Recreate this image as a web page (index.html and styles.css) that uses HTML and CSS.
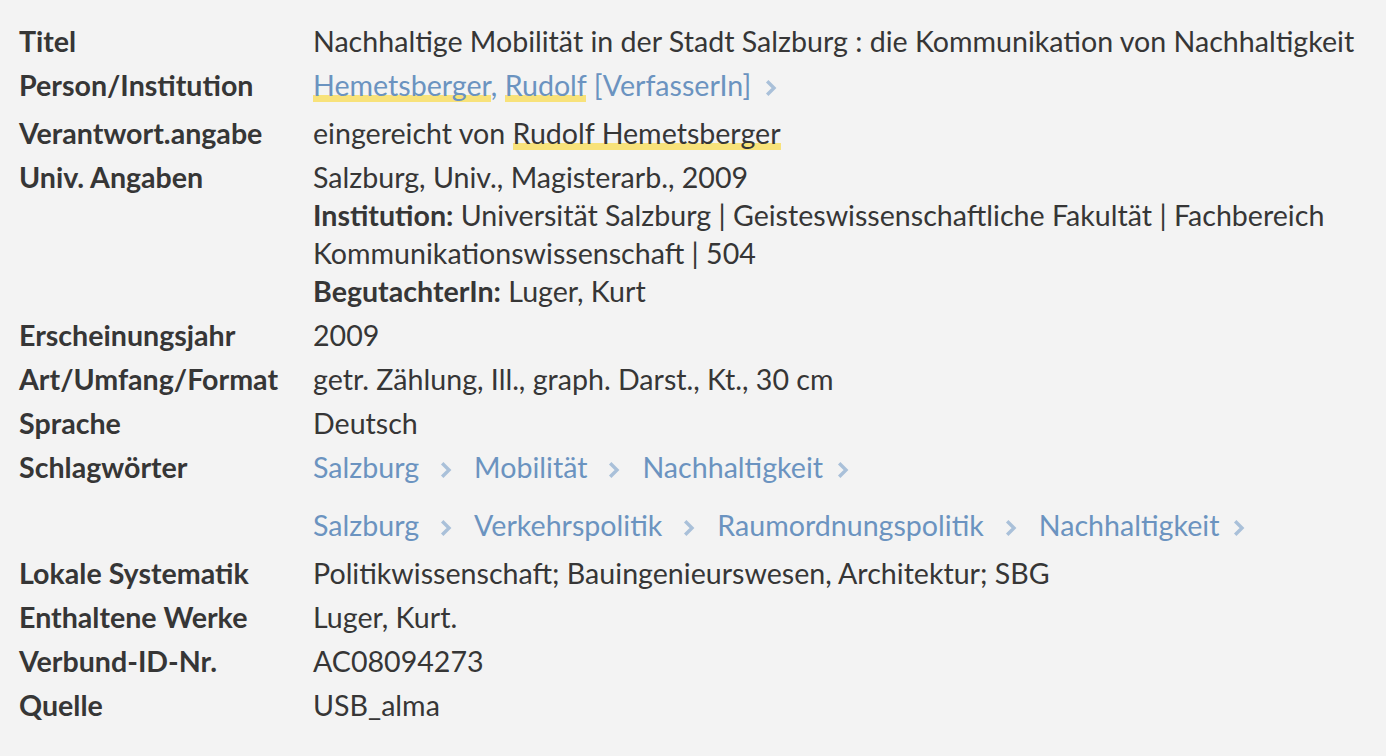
FILE: index.html
```html
<!DOCTYPE html>
<html lang="de">
<head>
<meta charset="utf-8">
<title>Detail</title>
<link rel="stylesheet" href="styles.css">
</head>
<body>
<dl class="record">
  <div class="row">
    <dt>Titel</dt>
    <dd>Nachhaltige Mobilität in der Stadt Salzburg : die Kommunikation von Nachhaltigkeit</dd>
  </div>
  <div class="row row-person">
    <dt>Person/Institution</dt>
    <dd><a class="link hl" href="#">Hemetsberger</a><span class="link">, </span><a class="link hl" href="#">Rudolf</a><span class="link"> [VerfasserIn]</span><span class="chev end"><svg viewBox="0 0 12 18" width="12" height="18"><path d="M2.2 2.2 L9 9 L2.2 15.8" fill="none" stroke="currentColor" stroke-width="3.4"/></svg></span></dd>
  </div>
  <div class="row">
    <dt>Verantwort.angabe</dt>
    <dd>eingereicht von <span class="hl">Rudolf Hemetsberger</span></dd>
  </div>
  <div class="row">
    <dt>Univ. Angaben</dt>
    <dd>Salzburg, Univ., Magisterarb., 2009<br><b>Institution:</b> Universität Salzburg | Geisteswissenschaftliche Fakultät | Fachbereich Kommunikationswissenschaft | 504<br><b>BegutachterIn:</b> Luger, Kurt</dd>
  </div>
  <div class="row">
    <dt>Erscheinungsjahr</dt>
    <dd>2009</dd>
  </div>
  <div class="row">
    <dt>Art/Umfang/Format</dt>
    <dd>getr. Zählung, Ill., graph. Darst., Kt., 30 cm</dd>
  </div>
  <div class="row">
    <dt>Sprache</dt>
    <dd>Deutsch</dd>
  </div>
  <div class="row row-subjects">
    <dt>Schlagwörter</dt>
    <dd>
      <div class="chain"><a class="link" href="#">Salzburg</a><span class="chev"><svg viewBox="0 0 12 18" width="12" height="18"><path d="M2.2 2.2 L9 9 L2.2 15.8" fill="none" stroke="currentColor" stroke-width="3.4"/></svg></span><a class="link" href="#">Mobilität</a><span class="chev"><svg viewBox="0 0 12 18" width="12" height="18"><path d="M2.2 2.2 L9 9 L2.2 15.8" fill="none" stroke="currentColor" stroke-width="3.4"/></svg></span><a class="link" href="#">Nachhaltigkeit</a><span class="chev end"><svg viewBox="0 0 12 18" width="12" height="18"><path d="M2.2 2.2 L9 9 L2.2 15.8" fill="none" stroke="currentColor" stroke-width="3.4"/></svg></span></div>
      <div class="chain"><a class="link" href="#">Salzburg</a><span class="chev"><svg viewBox="0 0 12 18" width="12" height="18"><path d="M2.2 2.2 L9 9 L2.2 15.8" fill="none" stroke="currentColor" stroke-width="3.4"/></svg></span><a class="link" href="#">Verkehrspolitik</a><span class="chev"><svg viewBox="0 0 12 18" width="12" height="18"><path d="M2.2 2.2 L9 9 L2.2 15.8" fill="none" stroke="currentColor" stroke-width="3.4"/></svg></span><a class="link" href="#">Raumordnungspolitik</a><span class="chev"><svg viewBox="0 0 12 18" width="12" height="18"><path d="M2.2 2.2 L9 9 L2.2 15.8" fill="none" stroke="currentColor" stroke-width="3.4"/></svg></span><a class="link" href="#">Nachhaltigkeit</a><span class="chev end"><svg viewBox="0 0 12 18" width="12" height="18"><path d="M2.2 2.2 L9 9 L2.2 15.8" fill="none" stroke="currentColor" stroke-width="3.4"/></svg></span></div>
    </dd>
  </div>
  <div class="row">
    <dt>Lokale Systematik</dt>
    <dd>Politikwissenschaft; Bauingenieurswesen, Architektur; SBG</dd>
  </div>
  <div class="row">
    <dt>Enthaltene Werke</dt>
    <dd>Luger, Kurt.</dd>
  </div>
  <div class="row">
    <dt>Verbund-ID-Nr.</dt>
    <dd>AC08094273</dd>
  </div>
  <div class="row">
    <dt>Quelle</dt>
    <dd>USB_alma</dd>
  </div>
</dl>
</body>
</html>
```
FILE: styles.css
```css
html, body {
  margin: 0;
  padding: 0;
  background: #f3f3f3;
}
body {
  font-family: Lato, "Noto Sans", sans-serif;
  font-size: 28.6px;
  line-height: 38px;
  color: #363636;
}
.record {
  margin: 0;
  padding: 22px 19px 0 19px;
  display: flex;
  flex-direction: column;
  gap: 6px;
}
.row {
  display: grid;
  grid-template-columns: 294px 1fr;
}
.row-person {
  padding-bottom: 4px;
}
dt {
  font-weight: 700;
  margin: 0;
}
dd {
  margin: 0;
}
b {
  font-weight: 700;
}
.link {
  color: #6b93c0;
  text-decoration: none;
}
.hl {
  background-image: linear-gradient(#f8e27a, #f8e27a);
  background-repeat: no-repeat;
  background-size: 100% 7px;
  background-position: 0 27px;
  padding-bottom: 2px;
}
.chev {
  display: inline-block;
  color: #a9c0d9;
  margin: 0 22px 0 21px;
  vertical-align: -1px;
  line-height: 0;
}
.chev.end {
  margin: 0 0 0 14px;
}
.chain + .chain {
  margin-top: 20px;
}
.row-subjects {
  padding-bottom: 4px;
}
```
